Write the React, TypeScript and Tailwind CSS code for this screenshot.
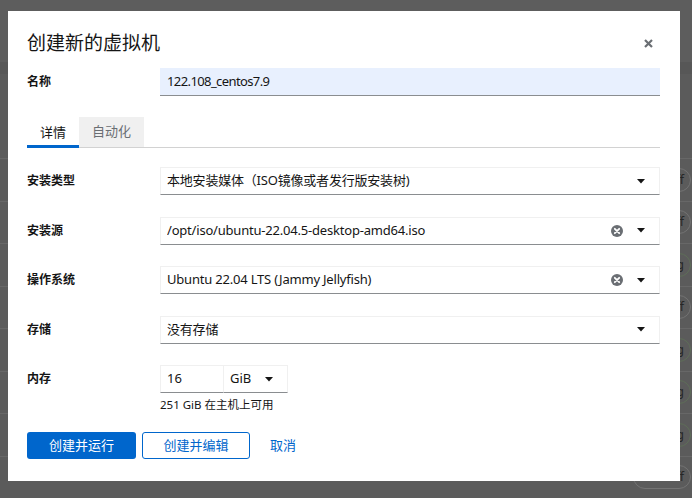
import React from "react";

const Caret = () => (
  <svg width="8" height="5" viewBox="0 0 8 5" className="block">
    <path d="M0 0h8L4 4.6z" fill="#151515" />
  </svg>
);

const ClearIcon = () => (
  <svg width="12" height="12" viewBox="0 0 12 12" className="block">
    <circle cx="6" cy="6" r="6" fill="#6a6e73" />
    <path d="M3.8 3.8l4.4 4.4M8.2 3.8l-4.4 4.4" stroke="#fff" strokeWidth="1.8" strokeLinecap="round" />
  </svg>
);

function SelectBox({ text, clear }: { text: string; clear?: boolean }) {
  return (
    <div className="flex h-[28px] items-center border border-[#f0f0f0] border-b-[#8a8d90] bg-white pl-[6px] pr-[14px]">
      <span className="flex-1 text-[13px] tracking-[-0.2px] text-[#151515] truncate">{text}</span>
      {clear && (
        <span className="mr-[14px]">
          <ClearIcon />
        </span>
      )}
      <Caret />
    </div>
  );
}

function Row({ label, children }: { label: string; children: React.ReactNode }) {
  return (
    <div className="grid grid-cols-[133px_1fr] items-center">
      <div className="text-[12px] font-bold text-[#151515]">{label}</div>
      <div>{children}</div>
    </div>
  );
}

const bgRows = ["Shut off", "Shut off", "Running", "Shut off", "Running", "Running", "Running", "Shut off"];

export default function App() {
  return (
    <div className="relative w-[692px] h-[498px] overflow-hidden bg-[#5b5b5b] font-['Noto_Sans','Noto_Sans_CJK_SC',sans-serif]">
      {/* background page behind overlay */}
      <div className="absolute inset-0 flex flex-col">
        <div className="h-[70px] bg-[#5d5d5d]" />
        <div className="h-[13px] bg-[#575757]" />
        <div className="h-[95px]" />
        {bgRows.map((s, i) => (
          <div key={i} className="flex h-[42.5px] shrink-0 items-center justify-end border-t border-[#676767] pr-[1px]">
            <span
              className={`rounded-full border px-[6px] text-[12px] leading-[22px] text-[#262626] ${
                s === "Running" ? "border-[#5e6e58]" : "border-[#737373]"
              }`}
            >
              {s}
            </span>
          </div>
        ))}
      </div>

      {/* modal */}
      <div className="absolute left-[8px] top-[11px] w-[672px] h-[470px] bg-white pl-[19px] pr-[20px] pt-[20px] text-[#151515]">
        <button className="absolute right-[27px] top-[28px] p-0">
          <svg width="9" height="9" viewBox="0 0 9 9" className="block">
            <path d="M1 1l7 7M8 1L1 8" stroke="#6a6e73" strokeWidth="2.2" />
          </svg>
        </button>
        <h1 className="text-[19px] leading-[24px] font-normal">创建新的虚拟机</h1>

        <div className="mt-[13px]">
          <Row label="名称">
            <div className="flex h-[28px] items-center border-b border-[#8a8d90] bg-[#e8f0fe] pl-[7px] text-[13px] tracking-[-0.6px]">
              122.108_centos7.9
            </div>
          </Row>
        </div>

        {/* tabs */}
        <div className="relative mt-[21px] flex h-[31px] border-b border-[#d2d2d2]">
          <div className="relative -mb-px flex items-center px-[13px] text-[13px] text-[#151515]">
            详情
            <div className="absolute bottom-0 left-0 right-0 h-[3px] bg-[#0066cc]" />
          </div>
          <div className="flex items-center bg-[#f0f0f0] px-[13px] text-[13px] text-[#6a6e73]">自动化</div>
        </div>

        <div className="mt-[19px] flex flex-col gap-[21.5px]">
          <Row label="安装类型">
            <SelectBox text="本地安装媒体（ISO镜像或者发行版安装树)" />
          </Row>
          <Row label="安装源">
            <SelectBox text="/opt/iso/ubuntu-22.04.5-desktop-amd64.iso" clear />
          </Row>
          <Row label="操作系统">
            <SelectBox text="Ubuntu 22.04 LTS (Jammy Jellyfish)" clear />
          </Row>
          <Row label="存储">
            <SelectBox text="没有存储" />
          </Row>
          <Row label="内存">
            <div className="flex">
              <div className="flex h-[28px] w-[64px] items-center border border-[#f0f0f0] border-b-[#8a8d90] pl-[6px] text-[13px]">
                16
              </div>
              <div className="flex h-[28px] w-[64px] items-center border border-l-0 border-[#f0f0f0] border-b-[#8a8d90] pl-[6px] pr-[14px] text-[13px]">
                <span className="flex-1">GiB</span>
                <Caret />
              </div>
            </div>
          </Row>
        </div>
        <div className="ml-[133px] mt-[4px] text-[11.5px] leading-[16px] text-[#151515]">251 GiB 在主机上可用</div>

        <div className="mt-[19px] flex items-center">
          <button className="h-[27px] w-[109px] rounded-[3px] bg-[#0066cc] text-[13px] text-white">创建并运行</button>
          <button className="ml-[6px] h-[27px] w-[108px] rounded-[3px] border border-[#0066cc] text-[13px] text-[#0066cc]">
            创建并编辑
          </button>
          <button className="ml-[20px] text-[13px] text-[#0066cc]">取消</button>
        </div>
      </div>
    </div>
  );
}
